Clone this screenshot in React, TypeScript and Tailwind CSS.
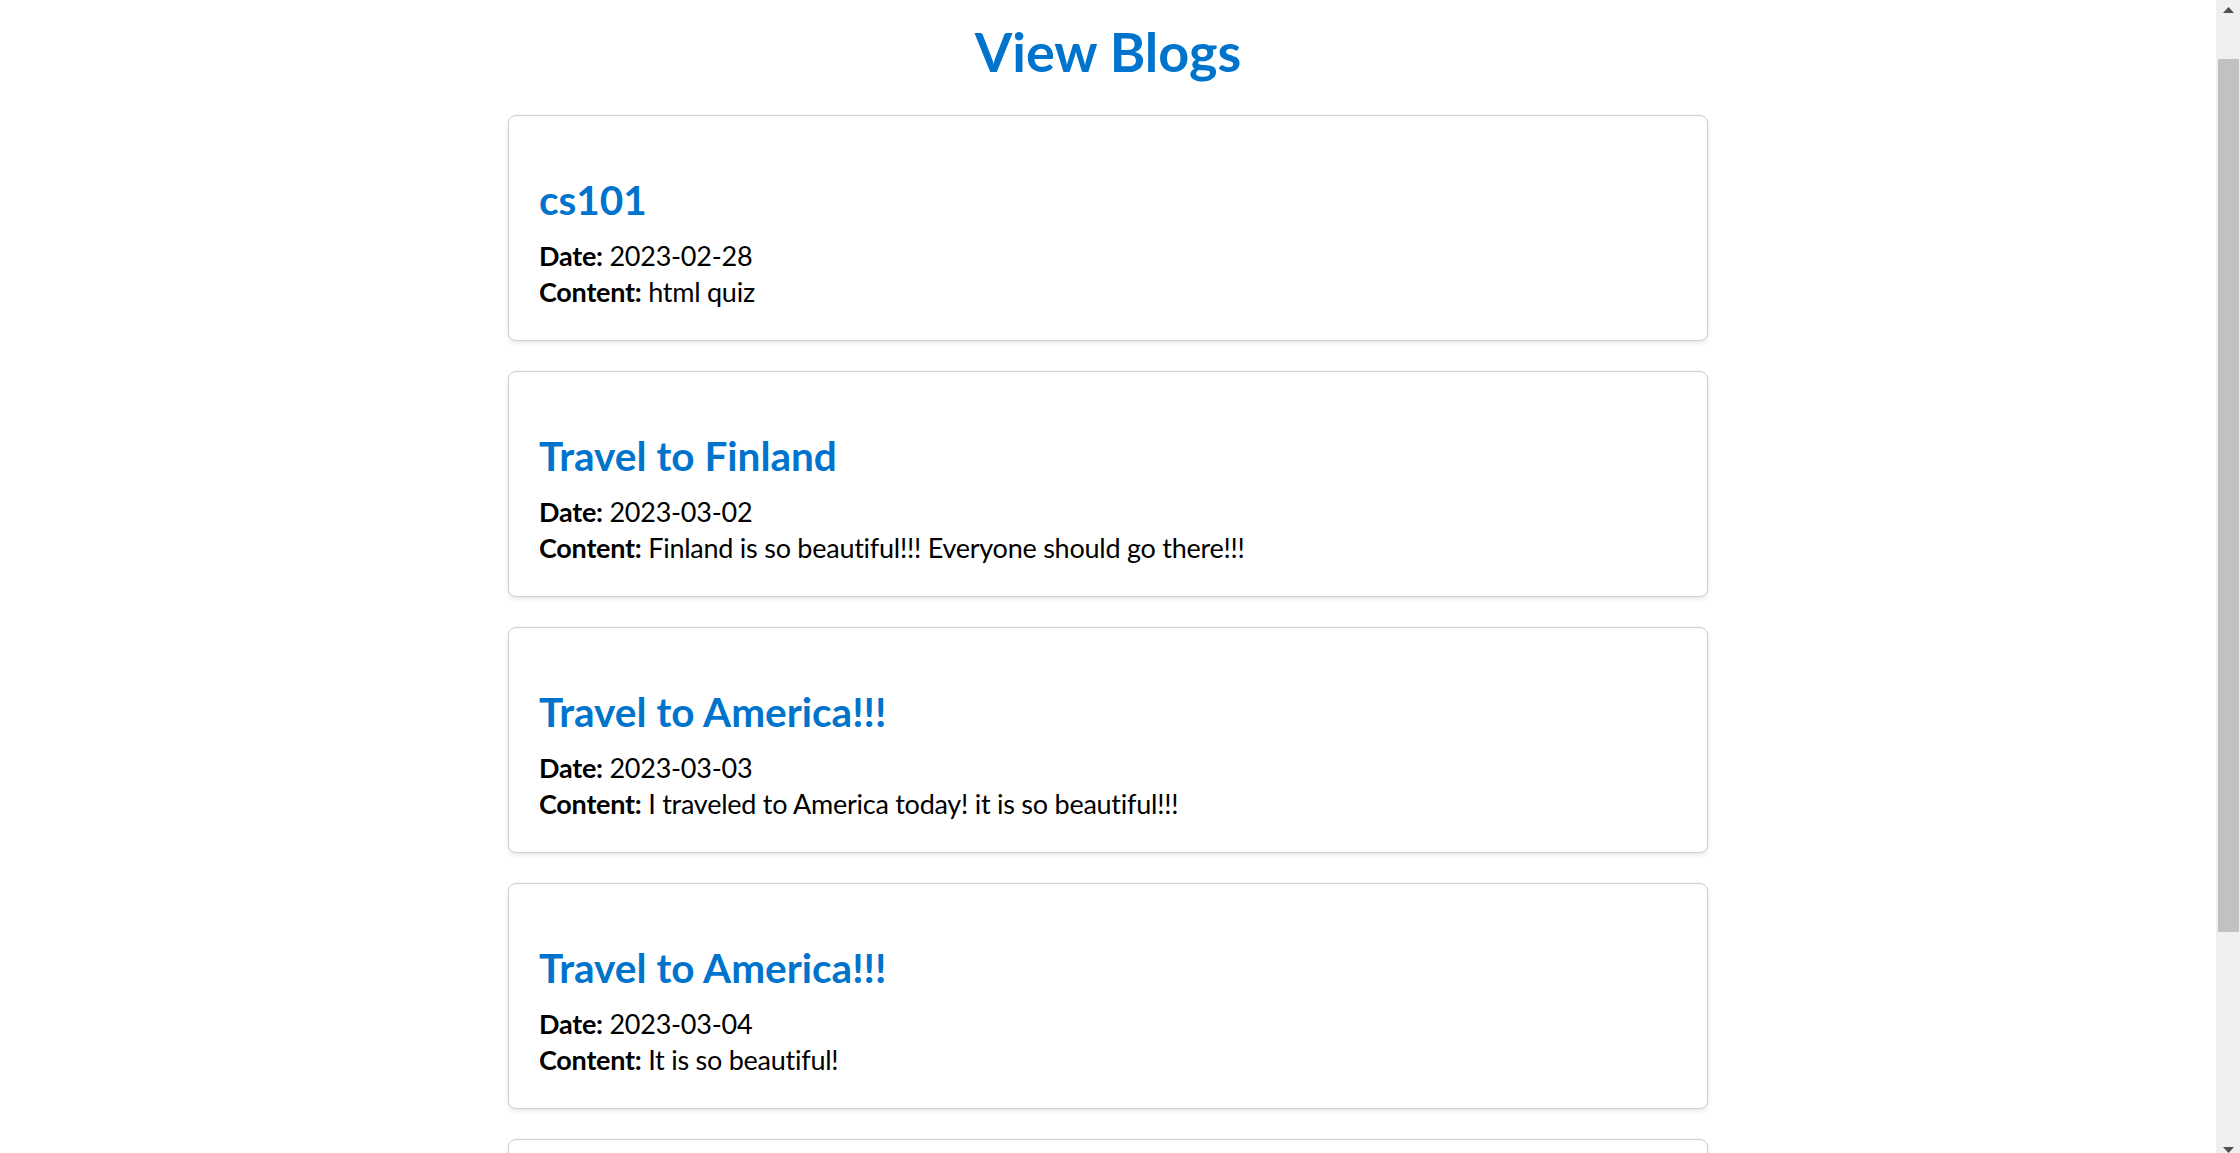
import React from 'react';

type Blog = {
  title: string;
  date: string;
  content: string;
};

const blogs: Blog[] = [
  { title: 'cs101', date: '2023-02-28', content: 'html quiz' },
  { title: 'Travel to Finland', date: '2023-03-02', content: 'Finland is so beautiful!!! Everyone should go there!!!' },
  { title: 'Travel to America!!!', date: '2023-03-03', content: 'I traveled to America today! it is so beautiful!!!' },
  { title: 'Travel to America!!!', date: '2023-03-04', content: 'It is so beautiful!' },
];

const cardClass =
  'w-[1200px] shrink-0 rounded-[8px] border border-[#cfcfcf] bg-white px-[30px] shadow-[0_2px_4px_rgba(0,0,0,0.1)]';

const BlogCard = ({ blog }: { blog: Blog }) => {
  return (
    <div className={`${cardClass} pt-[57px] pb-[30px]`}>
      <h2 className="text-[40.5px] font-bold leading-[54px] text-[#0074cc]">{blog.title}</h2>
      <div className="mt-[11px] text-[27px] leading-[36px] tracking-[-0.25px] text-black">
        <p>
          <strong>Date:</strong> {blog.date}
        </p>
        <p>
          <strong>Content:</strong> {blog.content}
        </p>
      </div>
    </div>
  );
};

const Scrollbar = () => {
  return (
    <div className="flex h-full w-[24px] shrink-0 flex-col bg-[#f0f0f0]">
      <div className="flex h-[59px] justify-center pt-[7px]">
        <svg width="11" height="6" viewBox="0 0 11 6">
          <path d="M5.5 0 L11 6 L0 6 Z" fill="#505050" />
        </svg>
      </div>
      <div className="ml-[2px] mr-[1px] h-[873px] bg-[#c1c1c1]" />
      <div className="flex flex-1 items-end justify-center">
        <svg width="11" height="6" viewBox="0 0 11 6">
          <path d="M0 0 L11 0 L5.5 6 Z" fill="#505050" />
        </svg>
      </div>
    </div>
  );
};

export default function App() {
  return (
    <div className="flex h-[1153px] overflow-hidden bg-white font-['Lato',sans-serif]">
      <main className="flex flex-1 flex-col items-center">
        <h1 className="mt-[16px] text-[54px] font-bold leading-[72px] text-[#0074cc]">View Blogs</h1>
        <div className="mt-[27px] flex flex-col gap-[30px]">
          {blogs.map((blog, i) => (
            <BlogCard key={i} blog={blog} />
          ))}
          {/* next post, below the fold */}
          <div className={`${cardClass} h-[226px]`} />
        </div>
      </main>
      <Scrollbar />
    </div>
  );
}
